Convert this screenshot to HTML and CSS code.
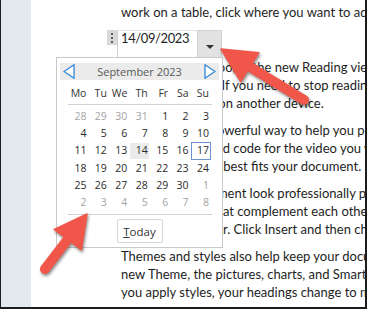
FILE: index.html
```html
<!DOCTYPE html>
<html lang="en">

<head>
    <meta charset="UTF-8">
    <meta name="viewport" content="width=device-width, initial-scale=1.0">
    <title>Date picker</title>
    <link rel="stylesheet" href="styles.css">
</head>

<body>
    <div class="frame">
        <div class="sidebar"></div>

        <div class="page">
            <p class="para first">
                <span class="line">work on a table, click where you want to add a row or a column, and then</span>
            </p>

            <!-- date content control -->
            <div class="date-ctl">
                <span class="grip"><i></i><i></i><i></i></span>
                <span class="date-field">14/09/2023</span>
                <span class="date-btn"><span class="caret"></span></span>
            </div>

            <p class="para">
                <span class="line">Reading is easy, too, in the new Reading view. You can collapse parts</span>
                <span class="line">all text you want. If you need to stop reading before you reach the end,</span>
                <span class="line">he left off - even on another device.</span>
            </p>
            <p class="para">
                <span class="line">Video provides powerful way to help you prove your point.</span>
                <span class="line">paste in the embed code for the video you want to add. You can</span>
                <span class="line">for the video that best fits your document.</span>
            </p>
            <p class="para">
                <span class="line">makes your document look professionally produced, Word</span>
                <span class="line">footers designs that complement each other. For example,</span>
                <span class="line">tops, and a sidebar. Click Insert and then choose the elements</span>
            </p>
            <p class="para">
                <span class="line">Themes and styles also help keep your document coordinated.</span>
                <span class="line">new Theme, the pictures, charts, and SmartArt graphics change</span>
                <span class="line">you apply styles, your headings change to match the new theme.</span>
            </p>
        </div>

        <!-- calendar dropdown -->
        <div class="calendar">
            <div class="cal-head">
                <svg class="nav" width="12" height="15" viewBox="0 0 12 15"><polygon points="11,0.8 1,7.5 11,14.2" /></svg>
                <span class="cal-title">September 2023</span>
                <svg class="nav" width="12" height="15" viewBox="0 0 12 15"><polygon points="1,0.8 11,7.5 1,14.2" /></svg>
            </div>
            <div class="cal-grid names">
                <span>Mo</span><span>Tu</span><span>We</span><span>Th</span><span>Fr</span><span>Sa</span><span>Su</span>
            </div>
            <div class="cal-rule"></div>
            <div class="cal-grid days">
                <span class="other">28</span><span class="other">29</span><span class="other">30</span><span class="other">31</span><span>1</span><span>2</span><span>3</span>
                <span>4</span><span>5</span><span>6</span><span>7</span><span>8</span><span>9</span><span>10</span>
                <span>11</span><span>12</span><span>13</span><span class="today">14</span><span>15</span><span>16</span><span class="selected">17</span>
                <span>18</span><span>19</span><span>20</span><span>21</span><span>22</span><span>23</span><span>24</span>
                <span>25</span><span>26</span><span>27</span><span>28</span><span>29</span><span>30</span><span class="other">1</span>
                <span class="other">2</span><span class="other">3</span><span class="other">4</span><span class="other">5</span><span class="other">6</span><span class="other">7</span><span class="other">8</span>
            </div>
            <div class="cal-rule"></div>
            <div class="cal-foot">
                <button class="today-btn"><u>T</u>oday</button>
            </div>
        </div>

        <!-- callout arrows -->
        <svg class="arrows" width="364" height="307" viewBox="1 0 364 307">
            <g>
                <line x1="250" y1="67" x2="304" y2="100" />
                <polygon points="221,49 240.7,81.5 258.9,52.7" />
            </g>
            <g>
                <line x1="68" y1="239" x2="45" y2="269" />
                <polygon points="87,214 81.4,249.8 54.2,229.4" />
            </g>
        </svg>
    </div>
</body>

</html>
```

FILE: styles.css
```css
body {
    margin: 0;
    background: #fff;
}

.frame {
    position: relative;
    display: flex;
    width: 367px;
    height: 309px;
    box-sizing: border-box;
    border-left: 1px solid #1c1c1c;
    border-right: 2px solid #1c1c1c;
    border-bottom: 2px solid #1c1c1c;
    overflow: hidden;
}

.sidebar {
    width: 30px;
    flex: none;
    background: #e3eaee;
}

.page {
    flex: 1;
    min-width: 0;
    padding: 3px 0 0 90px;
    overflow: hidden;
    font-family: Lato, "Liberation Sans", sans-serif;
    font-size: 13px;
    color: #1e1e1e;
}

.para {
    margin: 0 0 9px;
}

.line {
    display: block;
    height: 18px;
    line-height: 18px;
    white-space: nowrap;
}

/* date control */
.date-ctl {
    display: flex;
    height: 28px;
    margin: 9px 0 0 -14px;
}

.grip {
    display: flex;
    flex-direction: column;
    align-items: center;
    justify-content: center;
    gap: 2px;
    width: 10px;
    height: 15px;
    background: #d8d8d8;
}

.grip i {
    width: 2px;
    height: 2px;
    background: #606060;
}

.date-field {
    width: 76px;
    padding-left: 3px;
    border-left: 1px solid #cfcfcf;
    border-top: 1px solid #e2e2e2;
    line-height: 15px;
    letter-spacing: -0.4px;
}

.date-btn {
    display: flex;
    align-items: center;
    justify-content: center;
    box-sizing: border-box;
    width: 25px;
    background: #e2e2e2;
    border: 1px solid #d2d2d2;
    border-bottom: none;
}

.caret {
    margin-top: 4px;
    border-left: 4px solid transparent;
    border-right: 4px solid transparent;
    border-top: 4px solid #333;
}

/* calendar */
.calendar {
    position: absolute;
    left: 55px;
    top: 57px;
    width: 167px;
    height: 191px;
    box-sizing: border-box;
    padding: 5px 3px 0;
    background: #fff;
    border: 1px solid #c9c9c9;
    font-family: "Open Sans", "Noto Sans", sans-serif;
    font-size: 10.5px;
    color: #2a2a2a;
}

.cal-head {
    display: flex;
    align-items: center;
    justify-content: space-between;
    height: 17px;
    padding: 0 3px;
    background: #ebebeb;
}

.nav polygon {
    fill: #fff;
    stroke: #2f86d6;
    stroke-width: 1.3;
}

.cal-title {
    color: #595959;
    font-size: 11px;
}

.cal-grid {
    display: grid;
    grid-template-columns: repeat(7, 1fr);
    margin: 0 8px 0 8px;
}

.cal-grid span {
    text-align: right;
    padding-right: 2px;
}

.names {
    height: 14px;
    line-height: 14px;
    margin-top: 6px;
    color: #333;
}

.cal-rule {
    height: 1px;
    margin: 4px 7px 0 8px;
    background: #d2d2d2;
}

.days {
    grid-auto-rows: 17.2px;
    line-height: 17.2px;
    margin-top: 3px;
    margin-bottom: -1px;
}

.days span {
    box-sizing: border-box;
}

.days .other {
    color: #a3a3a3;
}

.days .today {
    background: #ebebeb;
    box-shadow: inset 0 0 0 1px #fff;
}

.days .selected {
    border: 1px solid #6f93d2;
    line-height: 15.2px;
    padding-right: 1px;
}

.cal-foot {
    display: flex;
    justify-content: center;
    margin-top: 4px;
}

.today-btn {
    width: 46px;
    height: 24px;
    padding: 0;
    background: #fff;
    border: 1px solid #d6d6d6;
    border-radius: 2px;
    font-family: "Open Sans", "Noto Sans", sans-serif;
    font-size: 11.5px;
    color: #333;
}

/* red callouts */
.arrows {
    position: absolute;
    left: 0;
    top: 0;
    pointer-events: none;
    filter: drop-shadow(1px 2px 1.5px rgba(0, 0, 0, 0.45));
}

.arrows line {
    stroke: #f0574a;
    stroke-width: 10;
    stroke-linecap: round;
}

.arrows polygon {
    fill: #f0574a;
    stroke: #f0574a;
    stroke-width: 1.5;
    stroke-linejoin: round;
}
```
